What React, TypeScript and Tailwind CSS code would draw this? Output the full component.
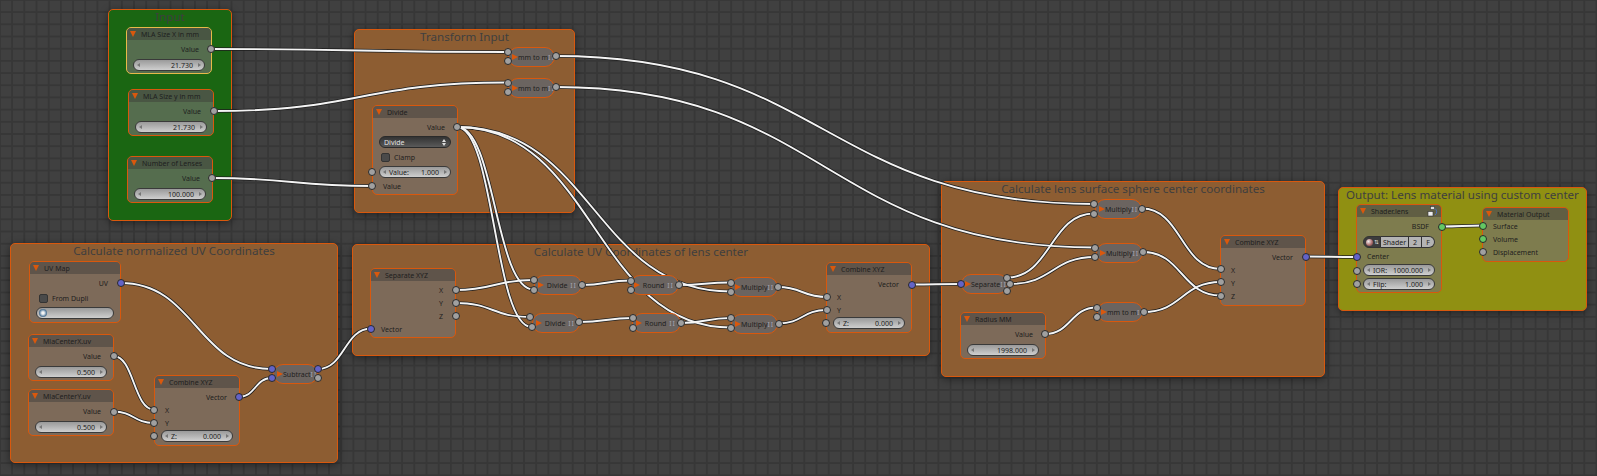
import type { ReactNode } from "react";

type Pt = [number, number];

const font = { fontFamily: '"Noto Sans", "Open Sans", sans-serif' };

const links: [Pt, Pt][] = [
  [[211, 49], [507.5, 52]],
  [[214, 111], [507.5, 82.5]],
  [[212, 178], [372, 186]],
  [[555.5, 56], [1094, 204]],
  [[556, 87], [1095, 247.5]],
  [[457, 127], [533.5, 289.5]],
  [[457, 127], [531.5, 327]],
  [[457, 127], [730.5, 291.5]],
  [[457, 127], [731, 327.5]],
  [[455.5, 290], [533.5, 280]],
  [[455.5, 303], [530, 317]],
  [[581.5, 285], [631, 280.5]],
  [[579, 322], [633, 318]],
  [[679, 285], [730.5, 282.5]],
  [[681, 323], [731, 318]],
  [[778, 287], [826.5, 297]],
  [[778.5, 323.5], [826.5, 310]],
  [[911.5, 284.5], [961, 284]],
  [[1007, 277.5], [1094, 213.5]],
  [[1010, 284], [1095, 257]],
  [[1045, 334], [1096.5, 307.5]],
  [[1142, 208.5], [1220.5, 269]],
  [[1143, 252], [1220.5, 295.5]],
  [[1143.5, 312], [1220.5, 282]],
  [[1306, 256.5], [1356.5, 257]],
  [[1441.5, 226.5], [1483, 225.5]],
  [[120.5, 283], [271.5, 369]],
  [[113.5, 356], [154, 409.5]],
  [[113.5, 411.5], [154, 423]],
  [[239, 397], [271.5, 378]],
  [[318, 369], [371, 328.5]],
];

const gray: Pt[] = [
  [211, 49], [214, 111], [212, 178], [507.5, 52], [507.5, 61], [555.5, 56], [507.5, 82.5], [507.5, 92], [556, 87],
  [457, 127], [372, 172], [372, 186], [113.5, 356], [113.5, 411.5], [154, 409.5], [154, 423], [154, 436], [318, 378],
  [455.5, 290], [455.5, 303], [455.5, 316], [533.5, 280], [533.5, 289.5], [581.5, 285], [530, 317], [531.5, 327], [579, 322],
  [631, 280.5], [631, 290], [679, 285], [633, 318], [633, 327.5], [681, 323],
  [730.5, 282.5], [730.5, 291.5], [778, 287], [731, 318], [731, 327.5], [778.5, 323.5],
  [826.5, 297], [826.5, 310], [826, 323],
  [1094, 204], [1094, 213.5], [1142, 208.5], [1095, 247.5], [1095, 257], [1143, 252],
  [1007, 277.5], [1010, 284], [1007, 290.5], [1045, 334], [1096.5, 307.5], [1096.5, 317], [1143.5, 312],
  [1220.5, 269], [1220.5, 282], [1220.5, 295.5], [1356.5, 270.5], [1356.5, 284], [1483, 252],
];
const blue: Pt[] = [
  [120.5, 283], [271.5, 369], [271.5, 378], [318, 369], [239, 397], [371, 328.5], [911.5, 284.5], [961, 284], [1306, 256.5], [1356.5, 257],
];
const green: Pt[] = [[1441.5, 226.5], [1483, 225.5], [1483, 239]];

function wirePath([a, b]: [Pt, Pt]) {
  const h = Math.abs(b[0] - a[0]) * 0.5;
  return `M${a[0]} ${a[1]} C${a[0] + h} ${a[1]} ${b[0] - h} ${b[1]} ${b[0]} ${b[1]}`;
}

function Frame({ x, y, w, h, title, color }: { x: number; y: number; w: number; h: number; title: string; color: string }) {
  return (
    <div
      className={`absolute rounded-[5px] border border-[#d9580d] shadow-[0_2px_8px_rgba(0,0,0,0.45)] ${color}`}
      style={{ left: x, top: y, width: w, height: h }}
    >
      <div className="text-center whitespace-nowrap text-[11.6px] leading-[13px] text-[#3f3f3f]">{title}</div>
    </div>
  );
}

function Field({ label, value }: { label?: string; value?: string }) {
  return (
    <div className="h-[12px] rounded-full border border-[#3a3a3a] bg-gradient-to-b from-[#9a9a9a] to-[#cfcfcf] flex items-center px-[3px] text-[7px] text-[#1c1c1c] leading-none">
      <span className="w-0 h-0 border-y-[2.5px] border-y-transparent border-r-[3px] border-r-[#777] mr-[3px]" />
      {label && <span>{label}</span>}
      <span className="ml-auto mr-[5px]">{value}</span>
      <span className="w-0 h-0 border-y-[2.5px] border-y-transparent border-l-[3px] border-l-[#777]" />
    </div>
  );
}

function Triangle({ right }: { right?: boolean }) {
  return right ? (
    <span className="w-0 h-0 border-y-[3px] border-y-transparent border-l-[6px] border-l-[#d9580d] shrink-0" />
  ) : (
    <span className="w-0 h-0 border-x-[3px] border-x-transparent border-t-[6px] border-t-[#d9580d] shrink-0" />
  );
}

function Node({ x, y, w, h, title, selected, flush, extra, children }: { x: number; y: number; w: number; h: number; title: string; selected?: boolean; flush?: boolean; extra?: ReactNode; children?: ReactNode }) {
  return (
    <div
      className={`absolute rounded-[5px] border overflow-hidden bg-[#74726e]/65 flex flex-col ${selected ? "border-[#e8b94a]" : "border-[#d9580d]"}`}
      style={{ left: x, top: y, width: w, height: h }}
    >
      <div className="h-[12px] shrink-0 bg-[#3c3a38]/45 flex items-center gap-[5px] pl-[3px] pr-[3px] text-[7px] leading-none text-[#1e1e1e]">
        <Triangle />
        <span className="whitespace-nowrap">{title}</span>
        {extra}
      </div>
      <div className={`flex-1 flex flex-col px-[6px] ${flush ? "" : "pt-[3px]"}`}>{children}</div>
    </div>
  );
}

function Pill({ x, y, w, label }: { x: number; y: number; w: number; label: string }) {
  return (
    <div
      className="absolute h-[20px] rounded-full border border-[#d9580d] bg-[#6b6460] flex items-center pl-[3px] pr-[4px] text-[7px] text-[#1e1e1e] leading-none"
      style={{ left: x, top: y, width: w }}
    >
      <Triangle right />
      <span className="flex-1 text-center whitespace-nowrap">{label}</span>
      <span className="text-[#a5a5b5] text-[7px] tracking-[1px]">II</span>
    </div>
  );
}

function Row({ right, label }: { right?: boolean; label: string }) {
  return (
    <div className={`h-[13px] shrink-0 flex items-center text-[7px] leading-none text-[#1e1e1e] whitespace-nowrap ${right ? "justify-end pr-[6px]" : "pl-[4px]"}`}>
      {label}
    </div>
  );
}

function Checkbox({ label }: { label: string }) {
  return (
    <div className="h-[13px] shrink-0 flex items-center gap-[4px] pl-[2px] text-[7px] leading-none text-[#1e1e1e]">
      <span className="w-[9px] h-[9px] rounded-[2px] bg-[#4a4a4a] border border-[#333]" />
      {label}
    </div>
  );
}

function ValueNode({ x, y, title, value, selected }: { x: number; y: number; title: string; value: string; selected?: boolean }) {
  return (
    <Node x={x} y={y} w={86} h={47} title={title} selected={selected}>
      <Row right label="Value" />
      <div className="mt-[3px]">
        <Field value={value} />
      </div>
    </Node>
  );
}

function CombineNode({ x, y, field }: { x: number; y: number; field?: boolean }) {
  return (
    <Node x={x} y={y} w={86} h={71} title="Combine XYZ">
      <Row right label="Vector" />
      <Row label="X" />
      <Row label="Y" />
      {field ? <Field label="Z:" value="0.000" /> : <Row label="Z" />}
    </Node>
  );
}

function Sockets({ points, color }: { points: Pt[]; color: string }) {
  return (
    <>
      {points.map(([x, y]) => (
        <span
          key={`${x}-${y}`}
          className={`absolute w-[8px] h-[8px] rounded-full border border-[#2a2a2a] ${color}`}
          style={{ left: x - 4, top: y - 4 }}
        />
      ))}
    </>
  );
}

export default function App() {
  return (
    <div
      className="relative w-[1597px] h-[476px] overflow-hidden bg-[#404040] bg-[linear-gradient(#373737_1.5px,transparent_1.5px),linear-gradient(90deg,#373737_1.5px,transparent_1.5px)] bg-[size:12.2px_12.2px] bg-[position:-1px_-1px]"
      style={font}
    >
      <Frame x={108} y={9} w={124} h={212} title="Input" color="bg-[#186810]/95" />
      <Frame x={354} y={29} w={221} h={184} title="Transform Input" color="bg-[#915f32]/95" />
      <Frame x={10} y={243} w={328} h={220} title="Calculate normalized UV Coordinates" color="bg-[#915f32]/95" />
      <Frame x={352} y={244} w={578} h={112} title="Calculate UV Coordinates of lens center" color="bg-[#915f32]/95" />
      <Frame x={941} y={181} w={384} h={196} title="Calculate lens surface sphere center coordinates" color="bg-[#915f32]/95" />
      <Frame x={1338} y={187} w={249} h={124} title="Output: Lens material using custom center" color="bg-[#959510]/95" />

      <svg className="absolute inset-0" width={1597} height={476} fill="none">
        {links.map((l, i) => (
          <path key={`o${i}`} d={wirePath(l)} stroke="#1e1e1e" strokeWidth={3.4} />
        ))}
        {links.map((l, i) => (
          <path key={`w${i}`} d={wirePath(l)} stroke="#f4f4f4" strokeWidth={1.9} />
        ))}
      </svg>

      <ValueNode x={126} y={27} title="MLA Size X in mm" value="21.730" selected />
      <ValueNode x={128} y={89} title="MLA Size y in mm" value="21.730" />
      <ValueNode x={127} y={156} title="Number of Lenses" value="100.000" />

      <Pill x={508} y={47} w={47} label="mm to m" />
      <Pill x={508} y={78} w={47} label="mm to m" />

      <Node x={372} y={105} w={86} h={90} title="Divide">
        <Row right label="Value" />
        <div className="mt-[2px] h-[12px] shrink-0 rounded-full border border-[#2a2a2a] bg-gradient-to-b from-[#333] to-[#5a5a5a] flex items-center justify-between px-[4px] text-[7px] leading-none text-[#e2e2e2]">
          <span>Divide</span>
          <span className="flex flex-col gap-px">
            <span className="w-0 h-0 border-x-[2px] border-x-transparent border-b-[3px] border-b-[#ddd]" />
            <span className="w-0 h-0 border-x-[2px] border-x-transparent border-t-[3px] border-t-[#ddd]" />
          </span>
        </div>
        <div className="mt-[3px]">
          <Checkbox label="Clamp" />
        </div>
        <div className="mt-[2px]">
          <Field label="Value:" value="1.000" />
        </div>
        <div className="mt-[2px]">
          <Row label="Value" />
        </div>
      </Node>

      <Node x={29} y={261} w={92} h={62} title="UV Map">
        <Row right label="UV" />
        <div className="mt-[2px] pl-[1px]">
          <Checkbox label="From Dupli" />
        </div>
        <div className="mt-[2px] h-[12px] shrink-0 rounded-full border border-[#3a3a3a] bg-gradient-to-b from-[#9a9a9a] to-[#cfcfcf] flex items-center pl-[2px]">
          <span className="w-[8px] h-[8px] rounded-full bg-[radial-gradient(circle,#f4f4f4_20%,#5a7fa0_60%,#444_100%)]" />
        </div>
      </Node>

      <ValueNode x={28} y={334} title="MlaCenterX.uv" value="0.500" />
      <ValueNode x={28} y={389} title="MlaCenterY.uv" value="0.500" />
      <CombineNode x={154} y={375} field />
      <Pill x={273} y={364} w={45} label="Subtract" />

      <Node x={370} y={268} w={86} h={70} title="Separate XYZ">
        <Row right label="X" />
        <Row right label="Y" />
        <Row right label="Z" />
        <Row label="Vector" />
      </Node>

      <Pill x={534} y={275} w={48} label="Divide" />
      <Pill x={532} y={313} w={48} label="Divide" />
      <Pill x={630} y={275} w={49} label="Round" />
      <Pill x={632} y={313} w={49} label="Round" />
      <Pill x={731} y={277} w={47} label="Multiply" />
      <Pill x={731} y={314} w={47} label="Multiply" />
      <CombineNode x={826} y={262} field />

      <Pill x={1095} y={199} w={47} label="Multiply" />
      <Pill x={1096} y={243} w={47} label="Multiply" />
      <Pill x={961} y={274} w={47} label="Separate" />
      <ValueNode x={960} y={312} title="Radius MM" value="1998.000" />
      <Pill x={1097} y={302} w={46} label="mm to m" />
      <CombineNode x={1220} y={235} />

      <Node
        x={1356}
        y={204}
        w={86}
        h={89}
        title="Shader.lens"
        extra={
          <svg className="ml-auto" width={11} height={11} viewBox="0 0 11 11" fill="none">
            <rect x={1} y={5.5} width={5} height={4.5} fill="#eee" stroke="#333" strokeWidth={0.6} />
            <rect x={3.5} y={0.5} width={4} height={3} fill="#ddd" stroke="#333" strokeWidth={0.6} />
            <path d="M8 2.5 A4 4 0 0 1 8 9" stroke="#4a6fc0" strokeWidth={1} />
          </svg>
        }
      >
        <Row right label="BSDF" />
        <div className="mt-[3px] h-[12px] shrink-0 flex items-stretch text-[7px] leading-none text-[#1c1c1c]">
          <span className="w-[18px] rounded-l-full border border-[#333] bg-[#3c3c3c] flex items-center pl-[2px] gap-[1px]">
            <span className="w-[7px] h-[7px] rounded-full bg-[radial-gradient(circle_at_35%_35%,#eee,#a66_60%,#444)]" />
            <span className="text-[6px] text-[#ddd]">⇅</span>
          </span>
          <span className="flex-1 border-y border-r border-[#333] bg-[#b4b4b4] flex items-center justify-center overflow-hidden">Shader</span>
          <span className="w-[13px] border-y border-r border-[#333] bg-[#b4b4b4] flex items-center justify-center">2</span>
          <span className="w-[13px] rounded-r-full border-y border-r border-[#333] bg-[#b4b4b4] flex items-center justify-center">F</span>
        </div>
        <div className="mt-[2px]">
          <Row label="Center" />
        </div>
        <div className="mt-px flex flex-col gap-[2px]">
          <Field label="IOR:" value="1000.000" />
          <Field label="Flip:" value="1.000" />
        </div>
      </Node>

      <Node x={1482} y={207} w={87} h={55} title="Material Output" flush>
        <Row label="Surface" />
        <Row label="Volume" />
        <Row label="Displacement" />
      </Node>

      <Sockets points={gray} color="bg-[#a0a0a0]" />
      <Sockets points={blue} color="bg-[#6363c7]" />
      <Sockets points={green} color="bg-[#63c763]" />
    </div>
  );
}
